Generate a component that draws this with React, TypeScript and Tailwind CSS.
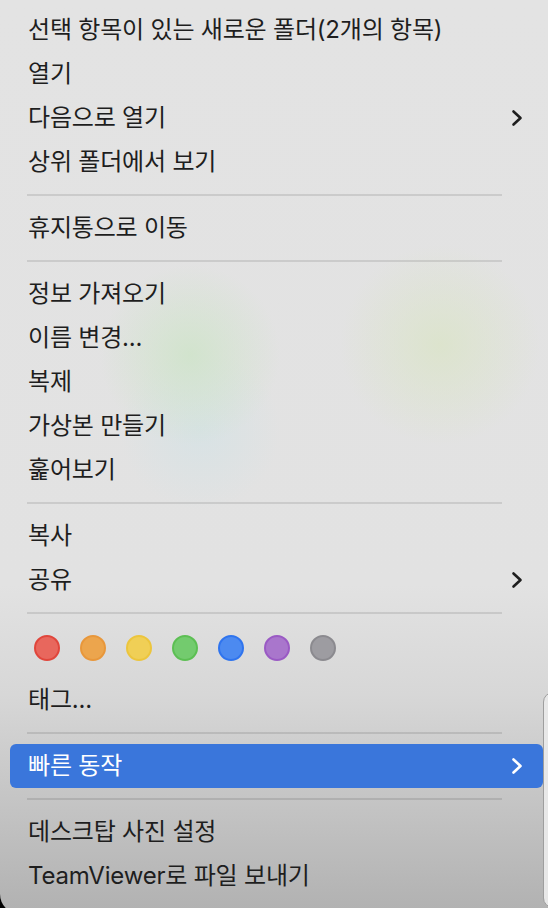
import React from 'react';

type Entry =
  | { kind: 'item'; label: string; submenu?: boolean; active?: boolean }
  | { kind: 'sep' }
  | { kind: 'tags' };

const entries: Entry[] = [
  { kind: 'item', label: '선택 항목이 있는 새로운 폴더(2개의 항목)' },
  { kind: 'item', label: '열기' },
  { kind: 'item', label: '다음으로 열기', submenu: true },
  { kind: 'item', label: '상위 폴더에서 보기' },
  { kind: 'sep' },
  { kind: 'item', label: '휴지통으로 이동' },
  { kind: 'sep' },
  { kind: 'item', label: '정보 가져오기' },
  { kind: 'item', label: '이름 변경...' },
  { kind: 'item', label: '복제' },
  { kind: 'item', label: '가상본 만들기' },
  { kind: 'item', label: '훑어보기' },
  { kind: 'sep' },
  { kind: 'item', label: '복사' },
  { kind: 'item', label: '공유', submenu: true },
  { kind: 'sep' },
  { kind: 'tags' },
  { kind: 'item', label: '태그...' },
  { kind: 'sep' },
  { kind: 'item', label: '빠른 동작', submenu: true, active: true },
  { kind: 'sep' },
  { kind: 'item', label: '데스크탑 사진 설정' },
  { kind: 'item', label: 'TeamViewer로 파일 보내기' },
];

// finder tag colours: fill + ring
const tags = [
  'bg-[#e8675d] border-[#e0463c]',
  'bg-[#eca54d] border-[#e8973b]',
  'bg-[#f0cf56] border-[#ecc53d]',
  'bg-[#73cb6e] border-[#5cbf53]',
  'bg-[#4c8af0] border-[#2f74ee]',
  'bg-[#a976cc] border-[#9a5ac4]',
  'bg-[#9d9ca1] border-[#8b8a8f]',
];

const Chevron: React.FC<{ className?: string }> = ({ className }) => (
  <svg width="12" height="18" viewBox="0 0 12 18" className={className}>
    <path
      d="M2.5 2.5 L9.5 9 L2.5 15.5"
      fill="none"
      stroke="currentColor"
      strokeWidth="2.6"
      strokeLinecap="round"
      strokeLinejoin="round"
    />
  </svg>
);

const App: React.FC = () => {
  return (
    <div className="relative w-[548px] h-[908px] overflow-hidden bg-black font-['Inter','Noto_Sans_CJK_KR',sans-serif]">
      {/* main context menu */}
      <div className="w-[560px] h-[914px] pt-[8px] rounded-bl-[20px] bg-[radial-gradient(circle_at_190px_355px,rgba(204,228,198,0.75),transparent_90px),radial-gradient(circle_at_200px_430px,rgba(208,226,230,0.6),transparent_80px),radial-gradient(circle_at_440px_345px,rgba(218,228,198,0.75),transparent_100px),linear-gradient(to_bottom,#e3e3e3_0%,#e2e2e2_64%,#d7d7d7_76%,#c4c4c4_88%,#b1b1b1_100%)]">
        <div className="flex flex-col">
          {entries.map((e, i) => {
            if (e.kind === 'sep') {
              return (
                <div key={i} className="h-[22px] flex items-center px-[27px]">
                  <div className="w-[475px] h-[2px] bg-black/10" />
                </div>
              );
            }
            if (e.kind === 'tags') {
              return (
                <div key={i} className="h-[54px] pt-[11px] pl-[34px] flex items-start gap-[20px]">
                  {tags.map((t) => (
                    <span key={t} className={`w-[26px] h-[26px] rounded-full border-2 ${t}`} />
                  ))}
                </div>
              );
            }
            return (
              <div
                key={i}
                className={`mx-[10px] w-[533px] h-[44px] pl-[18px] pr-[20px] flex items-center justify-between rounded-[6px] text-[24px] tracking-[-0.2px] ${
                  e.active ? 'bg-[#3a76db] text-white' : 'text-[#1e1e1e]'
                }`}
              >
                <span className="leading-none">{e.label}</span>
                {e.submenu && <Chevron className={e.active ? 'text-white' : 'text-[#1e1e1e]'} />}
              </div>
            );
          })}
        </div>
      </div>

      {/* edge of the opened submenu */}
      <div className="absolute left-[543px] top-[692px] w-[24px] h-[216px] rounded-l-[10px] border border-[#9e9e9e] bg-linear-to-r from-[#e9e9e9] to-[#dcdcdc]" />
    </div>
  );
};

export default App;
